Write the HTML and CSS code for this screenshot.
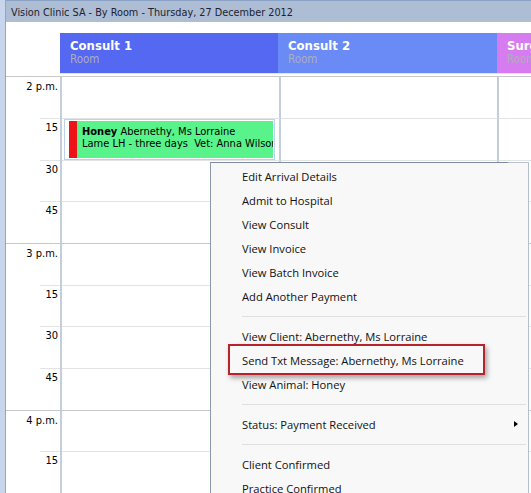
FILE: index.html
```html
<!DOCTYPE html>
<html>
<head>
<meta charset="utf-8">
<link rel="stylesheet" href="styles.css">
</head>
<body>
<div class="window">
  <div class="frame"></div>
  <div class="main">
    <div class="titlebar">Vision Clinic SA - By Room - Thursday, 27 December 2012</div>
    <div class="headers">
      <div class="hspacer"></div>
      <div class="colhead c1"><div class="cname">Consult 1</div><div class="ctype">Room</div></div>
      <div class="colhead c2"><div class="cname">Consult 2</div><div class="ctype">Room</div></div>
      <div class="colhead c3"><div class="cname">Surgery</div><div class="ctype">Room</div></div>
    </div>
    <div class="grid">
      <div class="row hour"><div class="time"><span class="lbl">2 p.m.</span></div><div class="cell g1"></div><div class="cell g2"></div><div class="cell g3"></div></div>
      <div class="row"><div class="time"><span class="lbl">15</span></div><div class="cell g1"><div class="appt"><div class="flag"></div><div class="appt-body"><div><b>Honey</b> Abernethy, Ms Lorraine</div><div>Lame LH - three days&nbsp; Vet: Anna Wilson</div></div></div></div><div class="cell g2"></div><div class="cell g3"></div></div>
      <div class="row"><div class="time"><span class="lbl">30</span></div><div class="cell g1"></div><div class="cell g2"></div><div class="cell g3"></div></div>
      <div class="row"><div class="time"><span class="lbl">45</span></div><div class="cell g1"></div><div class="cell g2"></div><div class="cell g3"></div></div>
      <div class="row hour"><div class="time"><span class="lbl">3 p.m.</span></div><div class="cell g1"></div><div class="cell g2"></div><div class="cell g3"></div></div>
      <div class="row"><div class="time"><span class="lbl">15</span></div><div class="cell g1"></div><div class="cell g2"></div><div class="cell g3"></div></div>
      <div class="row"><div class="time"><span class="lbl">30</span></div><div class="cell g1"></div><div class="cell g2"></div><div class="cell g3"></div></div>
      <div class="row"><div class="time"><span class="lbl">45</span></div><div class="cell g1"></div><div class="cell g2"></div><div class="cell g3"></div></div>
      <div class="row hour"><div class="time"><span class="lbl">4 p.m.</span></div><div class="cell g1"></div><div class="cell g2"></div><div class="cell g3"></div></div>
      <div class="row"><div class="time"><span class="lbl">15</span></div><div class="cell g1"></div><div class="cell g2"></div><div class="cell g3"></div></div>
      <div class="row"><div class="time"><span class="lbl">30</span></div><div class="cell g1"></div><div class="cell g2"></div><div class="cell g3"></div></div>
    </div>
  </div>
</div>
<div class="menu">
  <div class="item">Edit Arrival Details</div>
  <div class="item">Admit to Hospital</div>
  <div class="item">View Consult</div>
  <div class="item">View Invoice</div>
  <div class="item">View Batch Invoice</div>
  <div class="item">Add Another Payment</div>
  <div class="sep"></div>
  <div class="item">View Client: Abernethy, Ms Lorraine</div>
  <div class="item">Send Txt Message: Abernethy, Ms Lorraine</div>
  <div class="item">View Animal: Honey</div>
  <div class="sep"></div>
  <div class="item sub">Status: Payment Received<span class="arrow"></span></div>
  <div class="sep"></div>
  <div class="item">Client Confirmed</div>
  <div class="item">Practice Confirmed</div>
  <div class="highlight"></div>
</div>
</body>
</html>
```

FILE: styles.css
```css
html, body {
  margin: 0;
  padding: 0;
}
body {
  width: 531px;
  height: 493px;
  overflow: hidden;
  position: relative;
  background: #ffffff;
  font-family: "DejaVu Sans Condensed", "DejaVu Sans", sans-serif;
  font-stretch: condensed;
  color: #000;
}
.window {
  display: flex;
  height: 493px;
}
.frame {
  width: 5px;
  background: #c7d6ec;
  border-right: 1px solid #91a6c6;
  flex: none;
}
.main {
  flex: 1;
  overflow: hidden;
  display: flex;
  flex-direction: column;
}
.titlebar {
  box-sizing: border-box;
  height: 22px;
  border-top: 1px solid #8aa1c6;
  padding-top: 2px;
  padding-left: 5px;
  line-height: 19px;
  font-size: 10.8px;
  color: #1c2230;
  background: #adbdd4;
  white-space: nowrap;
}
.headers {
  display: flex;
  margin-top: 11px;
  height: 41px;
  flex: none;
}
.hspacer {
  width: 54px;
  flex: none;
}
.colhead {
  box-sizing: border-box;
  height: 41px;
  border-bottom: 1px solid #dfe3ea;
  padding-left: 10px;
  flex: none;
  white-space: nowrap;
  overflow: hidden;
}
.c1 { width: 218px; background: #5468f1; }
.c2 { width: 219px; background: #6a8bf6; }
.c3 { flex: 1; background: #d77cf0; }
.cname {
  padding-top: 6px;
  font-size: 13px;
  line-height: 14px;
  font-weight: bold;
  color: #ffffff;
}
.ctype {
  font-size: 11.5px;
  line-height: 12px;
  color: #adadc0;
}
.grid {
  margin-top: 2px;
  display: flex;
  flex-direction: column;
}
.row {
  display: flex;
  height: 42px;
  flex: none;
}
.row:nth-child(3n) {
  height: 41px;
}
.time {
  box-sizing: border-box;
  width: 56px;
  flex: none;
  border-right: 2px solid #c2cdde;
  font-size: 11px;
}
.lbl {
  display: block;
  margin-left: 34px;
  border-top: 1px solid #e3e3e3;
  padding-top: 2px;
  padding-right: 2px;
  line-height: 13px;
  text-align: right;
  white-space: nowrap;
}
.hour .time {
  border-top: 1px solid #c8c8c8;
}
.hour .lbl {
  margin-left: 0;
  border-top: none;
  padding-top: 3px;
}
.cell {
  box-sizing: border-box;
  border-top: 1px solid #e3e3e3;
  flex: none;
}
.hour .cell {
  border-top-color: #c8c8c8;
}
.g1 { width: 219px; border-right: 2px solid #c2cdde; padding: 0 4px 0 2px; }
.g2 { width: 218px; border-right: 2px solid #c2cdde; }
.g3 { flex: 1; }
.appt {
  box-sizing: border-box;
  height: 100%;
  display: flex;
  border: 1px solid #bfd1ea;
  padding: 1px 1px 1px 4px;
  background: #ffffff;
}
.flag {
  width: 8px;
  background: #ee1318;
  flex: none;
}
.appt-body {
  flex: 1;
  background: #58f48b;
  padding: 5px 0 0 5px;
  font-size: 11px;
  line-height: 12px;
  white-space: nowrap;
  overflow: hidden;
}
.menu {
  position: absolute;
  left: 210px;
  top: 162px;
  width: 317px;
  height: 360px;
  padding-top: 1px;
  background: #f8f8f8;
  border: 1px solid #8c99ac;
  border-top-color: #7b8ca4;
  border-right-color: #b3bfce;
  font-family: "Open Sans", "Noto Sans", sans-serif;
  font-stretch: normal;
  font-size: 11.2px;
  color: #111;
}
.menu::before {
  content: "";
  position: absolute;
  top: -1px;
  right: -1px;
  width: 21px;
  height: 1px;
  background: #b7c2d0;
}
.item {
  display: flex;
  align-items: center;
  height: 24px;
  padding-left: 31px;
  padding-right: 10px;
  white-space: nowrap;
}
.arrow {
  margin-left: auto;
  width: 0;
  height: 0;
  border-left: 4px solid #000;
  border-top: 3.5px solid transparent;
  border-bottom: 3.5px solid transparent;
}
.sep {
  height: 1px;
  margin: 8px 2px 7px 31px;
  background: #e0e0e0;
}
.highlight {
  position: absolute;
  left: 17px;
  top: 181px;
  width: 253px;
  height: 27px;
  border: 2px solid #b8222b;
  box-shadow: 2px 3px 5px rgba(0, 0, 0, 0.35);
}
```
